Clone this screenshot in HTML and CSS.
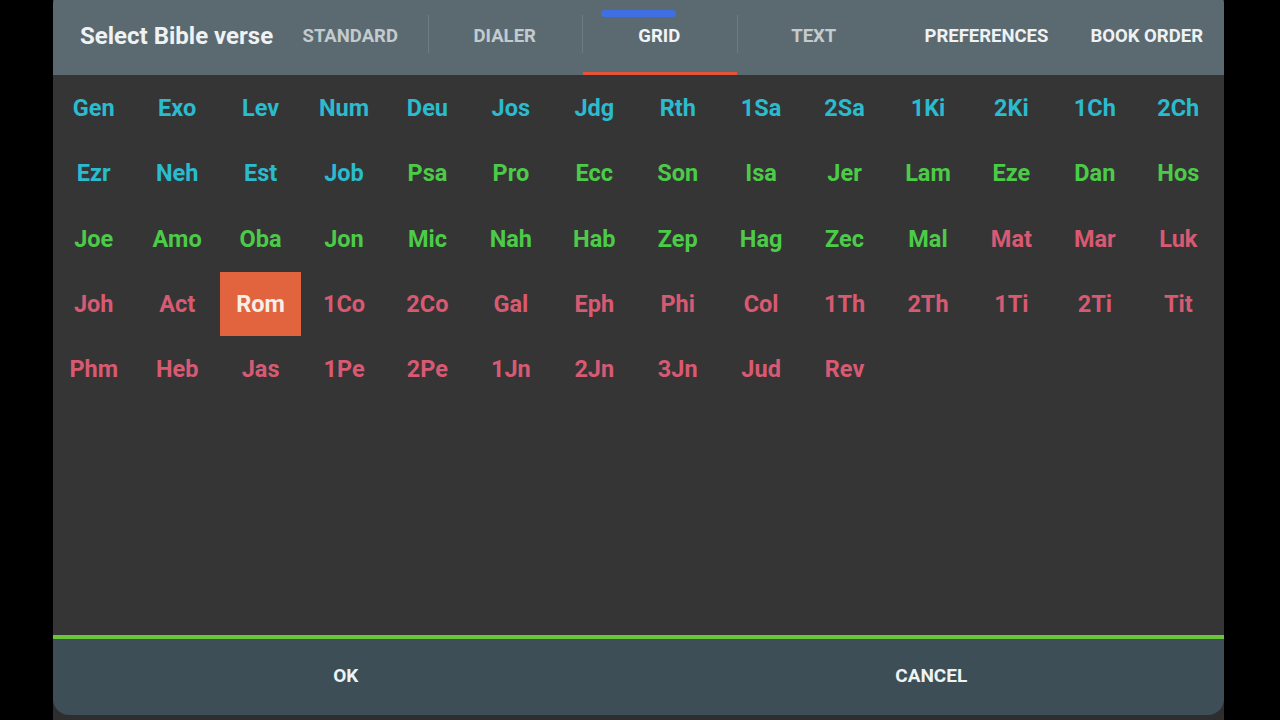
FILE: index.html
```html
<!DOCTYPE html>
<html lang="en">
<head>
    <meta charset="UTF-8">
    <meta name="viewport" content="width=device-width, initial-scale=1.0">
    <title>Select Bible verse</title>
    <link rel="stylesheet" href="styles.css">
</head>
<body>

<div class="dialog">
    <!-- header with tabs -->
    <div class="dialog-header">
        <div class="dialog-title">Select Bible verse</div>
        <div class="tabs">
            <div class="tab">STANDARD</div>
            <div class="tab">DIALER</div>
            <div class="tab selected">GRID<span class="handle"></span></div>
            <div class="tab">TEXT</div>
        </div>
        <div class="header-actions">
            <div class="header-btn">PREFERENCES</div>
            <div class="header-btn">BOOK ORDER</div>
        </div>
    </div>

    <!-- book grid -->
    <div class="book-grid">
        <div class="book ot-early">Gen</div>
        <div class="book ot-early">Exo</div>
        <div class="book ot-early">Lev</div>
        <div class="book ot-early">Num</div>
        <div class="book ot-early">Deu</div>
        <div class="book ot-early">Jos</div>
        <div class="book ot-early">Jdg</div>
        <div class="book ot-early">Rth</div>
        <div class="book ot-early">1Sa</div>
        <div class="book ot-early">2Sa</div>
        <div class="book ot-early">1Ki</div>
        <div class="book ot-early">2Ki</div>
        <div class="book ot-early">1Ch</div>
        <div class="book ot-early">2Ch</div>

        <div class="book ot-early">Ezr</div>
        <div class="book ot-early">Neh</div>
        <div class="book ot-early">Est</div>
        <div class="book ot-early">Job</div>
        <div class="book ot-late">Psa</div>
        <div class="book ot-late">Pro</div>
        <div class="book ot-late">Ecc</div>
        <div class="book ot-late">Son</div>
        <div class="book ot-late">Isa</div>
        <div class="book ot-late">Jer</div>
        <div class="book ot-late">Lam</div>
        <div class="book ot-late">Eze</div>
        <div class="book ot-late">Dan</div>
        <div class="book ot-late">Hos</div>

        <div class="book ot-late">Joe</div>
        <div class="book ot-late">Amo</div>
        <div class="book ot-late">Oba</div>
        <div class="book ot-late">Jon</div>
        <div class="book ot-late">Mic</div>
        <div class="book ot-late">Nah</div>
        <div class="book ot-late">Hab</div>
        <div class="book ot-late">Zep</div>
        <div class="book ot-late">Hag</div>
        <div class="book ot-late">Zec</div>
        <div class="book ot-late">Mal</div>
        <div class="book nt">Mat</div>
        <div class="book nt">Mar</div>
        <div class="book nt">Luk</div>

        <div class="book nt">Joh</div>
        <div class="book nt">Act</div>
        <div class="book nt current">Rom</div>
        <div class="book nt">1Co</div>
        <div class="book nt">2Co</div>
        <div class="book nt">Gal</div>
        <div class="book nt">Eph</div>
        <div class="book nt">Phi</div>
        <div class="book nt">Col</div>
        <div class="book nt">1Th</div>
        <div class="book nt">2Th</div>
        <div class="book nt">1Ti</div>
        <div class="book nt">2Ti</div>
        <div class="book nt">Tit</div>

        <div class="book nt">Phm</div>
        <div class="book nt">Heb</div>
        <div class="book nt">Jas</div>
        <div class="book nt">1Pe</div>
        <div class="book nt">2Pe</div>
        <div class="book nt">1Jn</div>
        <div class="book nt">2Jn</div>
        <div class="book nt">3Jn</div>
        <div class="book nt">Jud</div>
        <div class="book nt">Rev</div>
    </div>

    <!-- buttons -->
    <div class="dialog-footer">
        <div class="footer-btn">OK</div>
        <div class="footer-btn">CANCEL</div>
    </div>
</div>

</body>
</html>
```

FILE: styles.css
```css
body {
    font-family: Roboto, 'Liberation Sans', Arial, sans-serif;
    background: #000;
    margin: 0;
    padding: 0;
    height: 720px;
    overflow: hidden;
}

.dialog {
    width: 1171px;
    height: 730px;
    margin: -10px 0 0 53px;
    background: #2e2e2e;
    border-radius: 14px 14px 0 0;
    overflow: hidden;
    display: flex;
    flex-direction: column;
}

.dialog-header {
    position: relative;
    height: 75px;
    padding-top: 10px;
    background: #5b6a71;
    display: flex;
    align-items: stretch;
}

.dialog-title {
    width: 193px;
    padding-left: 27px;
    display: flex;
    align-items: center;
    font-size: 24px;
    font-weight: bold;
    color: #eef2f3;
    white-space: nowrap;
    padding-bottom: 4px;
}

.tabs {
    display: flex;
}

.tab {
    position: relative;
    width: 154.5px;
    display: flex;
    align-items: center;
    justify-content: center;
    font-size: 18.5px;
    font-weight: bold;
    color: #c3cbcf;
    padding-bottom: 4px;
}

.tab + .tab::before {
    content: "";
    position: absolute;
    left: 0;
    top: 15px;
    height: 38px;
    width: 1px;
    background: rgba(255, 255, 255, 0.12);
}

.tab.selected {
    color: #f1f4f5;
}

.tab.selected::after {
    content: "";
    position: absolute;
    left: 1px;
    right: 0;
    bottom: 0;
    height: 3px;
    background: #e2553b;
}

.handle {
    position: absolute;
    left: 19px;
    top: 10px;
    width: 75px;
    height: 7px;
    border-radius: 4px;
    background: #3f6fe0;
}

.header-actions {
    margin-left: auto;
    display: flex;
}

.header-btn {
    display: flex;
    align-items: center;
    padding: 0 21px 4px;
    font-size: 18.5px;
    font-weight: bold;
    color: #eef2f3;
    white-space: nowrap;
}

.book-grid {
    height: 560px;
    background: #353535;
    display: grid;
    grid-template-columns: repeat(14, 1fr);
    grid-auto-rows: 65.3px;
    align-content: start;
    padding-right: 3px;
}

.book {
    display: flex;
    align-items: center;
    justify-content: center;
    margin: 1px 2px 0 0;
    font-size: 23.5px;
    font-weight: bold;
}

.ot-early {
    color: #2bbbcf;
}

.ot-late {
    color: #4ccb48;
}

.nt {
    color: #d85a72;
}

.book.current {
    background: #e2643f;
    color: #f6eee9;
}

.dialog-footer {
    height: 76px;
    background: #3d4e56;
    border-top: 4px solid #6bc53b;
    border-radius: 0 0 16px 16px;
    display: flex;
}

.footer-btn {
    flex: 1;
    display: flex;
    align-items: center;
    justify-content: center;
    font-size: 19px;
    font-weight: bold;
    color: #eef2f3;
    padding-bottom: 4px;
}
```
